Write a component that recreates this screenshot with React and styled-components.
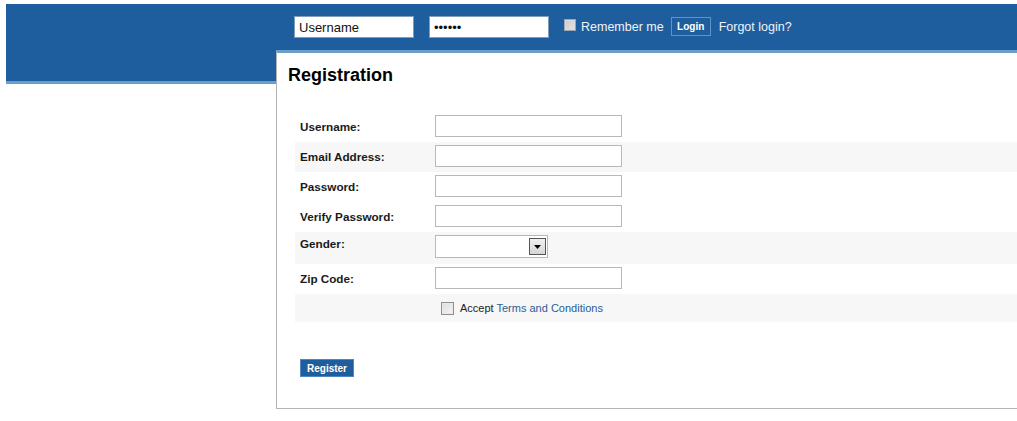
import React from 'react';
import styled, { createGlobalStyle } from 'styled-components';

const GlobalStyle = createGlobalStyle`
  html, body { margin: 0; padding: 0; background: #ffffff; }
  body {
    padding: 4px 0 0 6px;
    overflow: hidden;
    font-family: "Liberation Sans", Arial, sans-serif;
  }
`;

const Page = styled.div`
  width: auto;
`;

const Header = styled.header`
  height: 77px;
  background: #1f5e9e;
  border-bottom: 3px solid #6a9fc8;
`;

const LoginBar = styled.form`
  display: flex;
  align-items: center;
  height: 22px;
  padding: 12px 0 0 288px;
  margin: 0;
`;

const HeaderInput = styled.input`
  box-sizing: border-box;
  width: 120px;
  height: 22px;
  margin: 0 15px 0 0;
  padding: 0 4px;
  border: 1px solid #7f9db9;
  background: #ffffff;
  color: #111111;
  font: 13px "Liberation Sans", Arial, sans-serif;
  outline: none;
`;

const HeaderCheck = styled.input`
  appearance: none;
  box-sizing: border-box;
  width: 12px;
  height: 12px;
  margin: -4px 5px 0 0;
  border: 1px solid #9aa6b2;
  background: linear-gradient(135deg, #c8c8c8 0%, #e6e6e6 100%);
  box-shadow: inset 0 0 0 1px #dcdcdc;
`;

const HeaderText = styled.span`
  color: #eef3f8;
  font-size: 12.5px;
  margin-right: ${p => p.$gap || 0}px;
`;

const LoginButton = styled.button`
  box-sizing: border-box;
  width: 40px;
  height: 19px;
  margin: -1px 8px 0 0;
  padding: 0;
  border: 1px solid #5e94c6;
  background: #1f5e9e;
  color: #ffffff;
  font: bold 10px "Liberation Sans", Arial, sans-serif;
`;

const Panel = styled.main`
  box-sizing: border-box;
  margin: -34px 0 0 270px;
  background: #ffffff;
  border-top: 3px solid #6a9fc8;
  border-left: 1px solid #b4b4b4;
  border-bottom: 1px solid #b4b4b4;
  padding: 12px 0 31px 0;
`;

const Title = styled.h1`
  margin: 0 0 26px 0;
  padding-left: 11px;
  font-size: 18px;
  line-height: 21px;
  font-weight: bold;
  color: #000000;
`;

const FormTable = styled.div`
  display: flex;
  flex-direction: column;
  margin-left: 18px;
`;

const Row = styled.div`
  display: flex;
  align-items: ${p => (p.$top ? 'flex-start' : 'center')};
  box-sizing: border-box;
  height: ${p => p.$h || 30}px;
  padding: ${p => (p.$flat ? '0' : '3px 0 5px 0')};
  background: ${p => (p.$shade ? '#f7f7f7' : 'transparent')};
`;

const Label = styled.label`
  width: 135px;
  padding-left: 5px;
  margin-top: ${p => (p.$top ? 2 : 0)}px;
  font-size: 11.7px;
  line-height: 13px;
  font-weight: bold;
  color: #1a1a1a;
`;

const Field = styled.input`
  box-sizing: border-box;
  width: 187px;
  height: 22px;
  margin: 0;
  padding: 0 3px;
  border: 1px solid #b8b8b8;
  background: #ffffff;
  font: 12px "Liberation Sans", Arial, sans-serif;
  outline: none;
`;

const SelectWrap = styled.div`
  position: relative;
  width: 113px;
  height: 23px;
`;

const Select = styled.select`
  appearance: none;
  box-sizing: border-box;
  width: 113px;
  height: 23px;
  margin: 0;
  border: 1px solid #b8b8b8;
  background: #ffffff;
  font: 12px "Liberation Sans", Arial, sans-serif;
  outline: none;
`;

const ArrowBox = styled.span`
  position: absolute;
  right: 2px;
  top: 3px;
  box-sizing: border-box;
  width: 17px;
  height: 17px;
  border: 1px solid #555555;
  background: linear-gradient(180deg, #f0f0f0 0%, #d6d6d6 100%);
  display: flex;
  align-items: center;
  justify-content: center;
  pointer-events: none;
`;

const Spacer = styled.div`
  width: 146px;
`;

const Check = styled.input`
  appearance: none;
  box-sizing: border-box;
  width: 13px;
  height: 13px;
  margin: 0 6px 0 0;
  border: 1px solid #8f8f8f;
  background: linear-gradient(135deg, #dcdcdc 0%, #f6f6f6 100%);
  box-shadow: inset 0 0 0 1px #e8e8e8;
`;

const AcceptText = styled.span`
  font-size: 11px;
  color: #222222;
`;

const TermsLink = styled.a`
  color: #2a5d95;
  text-decoration: none;
`;

const RegisterButton = styled.button`
  box-sizing: border-box;
  display: block;
  width: 54px;
  height: 18px;
  margin: 37px 0 0 23px;
  padding: 0;
  border: 1px solid #4f86bd;
  background: #1f5e9e;
  color: #ffffff;
  font: bold 10px "Liberation Sans", Arial, sans-serif;
`;

const fields = [
  { label: 'Username:', type: 'text' },
  { label: 'Email Address:', type: 'text', shade: true },
  { label: 'Password:', type: 'password' },
  { label: 'Verify Password:', type: 'password' },
];

export default function App() {
  return (
    <Page>
      <GlobalStyle />
      <Header>
        <LoginBar onSubmit={e => e.preventDefault()}>
          <HeaderInput type="text" defaultValue="Username" />
          <HeaderInput type="password" defaultValue="secret" />
          <HeaderCheck type="checkbox" />
          <HeaderText $gap={7}>Remember me</HeaderText>
          <LoginButton type="button">Login</LoginButton>
          <HeaderText>Forgot login?</HeaderText>
        </LoginBar>
      </Header>
      <Panel>
        <Title>Registration</Title>
        <FormTable>
          {fields.map(f => (
            <Row key={f.label} $shade={f.shade}>
              <Label>{f.label}</Label>
              <Field type={f.type} />
            </Row>
          ))}
          <Row $shade $top $h={32}>
            <Label $top>Gender:</Label>
            <SelectWrap>
              <Select defaultValue="">
                <option value=""></option>
                <option value="m">Male</option>
                <option value="f">Female</option>
              </Select>
              <ArrowBox>
                <svg width="7" height="4" viewBox="0 0 7 4">
                  <path d="M0 0 H7 L3.5 4 Z" fill="#000" />
                </svg>
              </ArrowBox>
            </SelectWrap>
          </Row>
          <Row>
            <Label>Zip Code:</Label>
            <Field type="text" />
          </Row>
          <Row $shade $flat $h={28}>
            <Spacer />
            <Check type="checkbox" />
            <AcceptText>
              Accept <TermsLink href="#">Terms and Conditions</TermsLink>
            </AcceptText>
          </Row>
        </FormTable>
        <RegisterButton type="button">Register</RegisterButton>
      </Panel>
    </Page>
  );
}
